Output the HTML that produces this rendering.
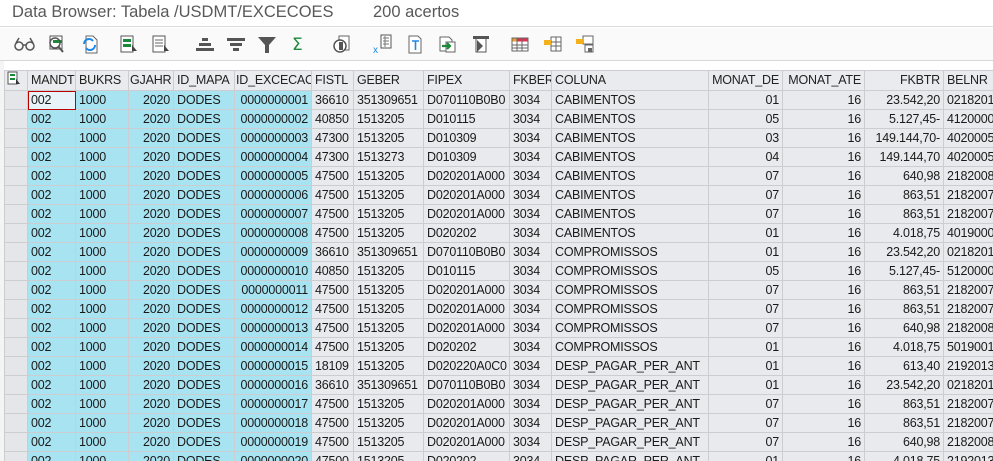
<!DOCTYPE html>
<html><head><meta charset="utf-8"><style>
*{margin:0;padding:0;box-sizing:border-box}
body{width:993px;height:461px;overflow:hidden;background:#fff;font-family:"Liberation Sans",sans-serif;position:relative}
#title{position:absolute;left:0;top:0;width:993px;height:27px;border-bottom:1px solid #dcdcdc;background:#fff}
#title span{position:absolute;top:3px;font-size:16.5px;color:#595959}
#tb{position:absolute;left:0;top:28px;width:993px;height:33px;background:#fafafa;border-bottom:1px solid #d8d8d8}
#tb svg{position:absolute;top:6px}
#wrap{position:absolute;left:0;top:61px;width:993px;height:400px;background:#fff;border-left:4px solid #f4f4f4;overflow:hidden}
table{position:absolute;left:0px;top:9px;width:999px;border-collapse:collapse;table-layout:fixed;font-size:12.5px;letter-spacing:-0.2px;color:#1a1a1a}
td,th{height:19px;border:1px solid #cbcdd0;padding:0 2px 0 3px;white-space:nowrap;overflow:hidden;font-weight:normal;text-align:left;line-height:17px}
th{background:#e9ebee;color:#222;height:18px}
td{background:#e8eaed}
td.k{background:#a8e3f1}
td.s{background:#e4e6e9}
.r{text-align:right;padding:0 3px 0 1px}
</style></head><body>
<div id="title"><span style="left:12px">Data Browser: Tabela /USDMT/EXCECOES</span><span style="left:373px">200 acertos</span></div>
<div id="tb">
<svg style="left:14px" width="22" height="20"><circle cx="5" cy="12" r="4" fill="none" stroke="#555" stroke-width="1.5"/><circle cx="16" cy="12" r="4" fill="none" stroke="#555" stroke-width="1.5"/><path d="M9 11h3M2 9l3-5M19 9l-3-5" stroke="#555" stroke-width="1.5" fill="none"/></svg>
<svg style="left:47px" width="20" height="20"><rect x="3" y="2" width="12" height="13" fill="#fff" stroke="#555"/><rect x="6" y="6" width="9" height="3" fill="#1a8a3a"/><circle cx="8" cy="9" r="5" fill="none" stroke="#555" stroke-width="1.5"/><path d="M11 12l5 6" stroke="#555" stroke-width="2"/></svg>
<svg style="left:80px" width="20" height="20"><path d="M6 2h7l4 4v13H6z" fill="#fff" stroke="#666"/><path d="M4 10a5 5 0 0 1 9-3M15 11a5 5 0 0 1-9 3" stroke="#1e88e5" stroke-width="2" fill="none"/></svg>
<svg style="left:119px" width="20" height="20"><rect x="2" y="2" width="12" height="16" fill="#fff" stroke="#555"/><rect x="4" y="5" width="8" height="3" fill="#1a8a3a"/><rect x="4" y="10" width="8" height="3" fill="#1a8a3a"/><path d="M13 11l5 6h-5z" fill="#444"/></svg>
<svg style="left:151px" width="20" height="20"><rect x="2" y="2" width="12" height="16" fill="#fff" stroke="#555"/><path d="M4 6h8M4 9h8M4 12h8" stroke="#666"/><path d="M13 11l5 6h-5z" fill="#444"/></svg>
<svg style="left:195px" width="20" height="20"><rect x="7" y="4" width="6" height="3" fill="#555"/><rect x="4" y="9" width="12" height="3" fill="#555"/><rect x="1" y="14" width="18" height="3" fill="#555"/></svg>
<svg style="left:226px" width="20" height="20"><rect x="1" y="4" width="18" height="3" fill="#555"/><rect x="4" y="9" width="12" height="3" fill="#555"/><rect x="7" y="14" width="6" height="3" fill="#555"/></svg>
<svg style="left:257px" width="20" height="20"><path d="M1 3h18l-7 8v8h-4v-8z" fill="#555"/></svg>
<svg style="left:289px" width="20" height="20"><text x="3" y="16" font-size="17" fill="#1a8a3a" font-family="DejaVu Sans">Σ</text></svg>
<svg style="left:332px" width="20" height="20"><rect x="7" y="2" width="10" height="14" fill="#fff" stroke="#666"/><circle cx="8" cy="12" r="6" fill="#fff" stroke="#555" stroke-width="1.5"/><rect x="7" y="8" width="4" height="8" fill="#555"/></svg>
<svg style="left:373px" width="20" height="20"><rect x="8" y="1" width="10" height="13" fill="#fff" stroke="#555"/><path d="M10 4h6M10 7h6M10 10h6M12 2v11" stroke="#777"/><text x="0" y="19" font-size="10" fill="#1e88e5">x</text></svg>
<svg style="left:405px" width="20" height="20"><path d="M4 2h9l3 3v14H4z" fill="#fff" stroke="#666"/><path d="M7 7h7M10.5 7v9" stroke="#1e88e5" stroke-width="1.6"/></svg>
<svg style="left:437px" width="20" height="20"><path d="M3 3h9l3 3v11H3z" fill="#fff" stroke="#666"/><rect x="9" y="8" width="9" height="10" fill="#fff" stroke="#666"/><path d="M5 12h7M10 9l3 3-3 3" stroke="#1a8a3a" stroke-width="2.2" fill="none"/></svg>
<svg style="left:471px" width="20" height="20"><rect x="2" y="2" width="16" height="3" fill="#555"/><path d="M5 5v13h10V5" fill="#fff" stroke="#555"/><path d="M6 6l6 6-6 6z" fill="#555"/></svg>
<svg style="left:510px" width="20" height="20"><rect x="2" y="4" width="16" height="13" fill="#fff" stroke="#666"/><rect x="2.5" y="4.5" width="15" height="3" fill="#d35"/><rect x="2.5" y="4.5" width="5" height="3" fill="#e8a030"/><path d="M2 11h16M2 14h16M7 4v13M12 4v13" stroke="#666"/></svg>
<svg style="left:543px" width="20" height="20"><rect x="8" y="3" width="10" height="14" fill="#fff" stroke="#666"/><path d="M8 8h10M8 12h10M13 3v14" stroke="#666"/><rect x="1" y="6" width="7" height="5" fill="#f3b21b"/></svg>
<svg style="left:575px" width="20" height="20"><rect x="8" y="2" width="10" height="8" fill="#fff" stroke="#666"/><rect x="10" y="11" width="8" height="7" fill="#fff" stroke="#666"/><rect x="1" y="5" width="7" height="5" fill="#f3b21b"/><rect x="13" y="14" width="4" height="4" fill="#666"/></svg>
</div>
<div id="wrap">
<table>
<colgroup><col style="width:23px"><col style="width:48px"><col style="width:53px"><col style="width:45px"><col style="width:61px"><col style="width:77px"><col style="width:42px"><col style="width:70px"><col style="width:86px"><col style="width:42px"><col style="width:157px"><col style="width:74px"><col style="width:82px"><col style="width:79px"><col style="width:60px"></colgroup>
<tr><th style="padding:0 2px"><svg width="16" height="14"><rect x="1" y="1" width="9" height="12" fill="#fff" stroke="#555"/><rect x="3" y="3" width="5" height="2" fill="#1a8a3a"/><rect x="3" y="7" width="5" height="2" fill="#1a8a3a"/><path d="M9 8l4 5h-4z" fill="#333"/></svg></th><th>MANDT</th><th>BUKRS</th><th class="r">GJAHR</th><th>ID_MAPA</th><th class="r">ID_EXCECAO</th><th>FISTL</th><th>GEBER</th><th>FIPEX</th><th>FKBER</th><th>COLUNA</th><th class="r">MONAT_DE</th><th class="r">MONAT_ATE</th><th class="r">FKBTR</th><th>BELNR</th></tr>
<tr><td class="s"></td><td class="k" style="background:#e8f2f9;outline:1px solid #b00;outline-offset:-1px">002</td><td class="k">1000</td><td class="k r">2020</td><td class="k">DODES</td><td class="k r">0000000001</td><td>36610</td><td>351309651</td><td>D070110B0B0</td><td>3034</td><td>CABIMENTOS</td><td class="r">01</td><td class="r">16</td><td class="r">23.542,20</td><td>0218201</td></tr>
<tr><td class="s"></td><td class="k">002</td><td class="k">1000</td><td class="k r">2020</td><td class="k">DODES</td><td class="k r">0000000002</td><td>40850</td><td>1513205</td><td>D010115</td><td>3034</td><td>CABIMENTOS</td><td class="r">05</td><td class="r">16</td><td class="r">5.127,45-</td><td>4120000</td></tr>
<tr><td class="s"></td><td class="k">002</td><td class="k">1000</td><td class="k r">2020</td><td class="k">DODES</td><td class="k r">0000000003</td><td>47300</td><td>1513205</td><td>D010309</td><td>3034</td><td>CABIMENTOS</td><td class="r">03</td><td class="r">16</td><td class="r">149.144,70-</td><td>4020005</td></tr>
<tr><td class="s"></td><td class="k">002</td><td class="k">1000</td><td class="k r">2020</td><td class="k">DODES</td><td class="k r">0000000004</td><td>47300</td><td>1513273</td><td>D010309</td><td>3034</td><td>CABIMENTOS</td><td class="r">04</td><td class="r">16</td><td class="r">149.144,70</td><td>4020005</td></tr>
<tr><td class="s"></td><td class="k">002</td><td class="k">1000</td><td class="k r">2020</td><td class="k">DODES</td><td class="k r">0000000005</td><td>47500</td><td>1513205</td><td>D020201A000</td><td>3034</td><td>CABIMENTOS</td><td class="r">07</td><td class="r">16</td><td class="r">640,98</td><td>2182008</td></tr>
<tr><td class="s"></td><td class="k">002</td><td class="k">1000</td><td class="k r">2020</td><td class="k">DODES</td><td class="k r">0000000006</td><td>47500</td><td>1513205</td><td>D020201A000</td><td>3034</td><td>CABIMENTOS</td><td class="r">07</td><td class="r">16</td><td class="r">863,51</td><td>2182007</td></tr>
<tr><td class="s"></td><td class="k">002</td><td class="k">1000</td><td class="k r">2020</td><td class="k">DODES</td><td class="k r">0000000007</td><td>47500</td><td>1513205</td><td>D020201A000</td><td>3034</td><td>CABIMENTOS</td><td class="r">07</td><td class="r">16</td><td class="r">863,51</td><td>2182007</td></tr>
<tr><td class="s"></td><td class="k">002</td><td class="k">1000</td><td class="k r">2020</td><td class="k">DODES</td><td class="k r">0000000008</td><td>47500</td><td>1513205</td><td>D020202</td><td>3034</td><td>CABIMENTOS</td><td class="r">01</td><td class="r">16</td><td class="r">4.018,75</td><td>4019000</td></tr>
<tr><td class="s"></td><td class="k">002</td><td class="k">1000</td><td class="k r">2020</td><td class="k">DODES</td><td class="k r">0000000009</td><td>36610</td><td>351309651</td><td>D070110B0B0</td><td>3034</td><td>COMPROMISSOS</td><td class="r">01</td><td class="r">16</td><td class="r">23.542,20</td><td>0218201</td></tr>
<tr><td class="s"></td><td class="k">002</td><td class="k">1000</td><td class="k r">2020</td><td class="k">DODES</td><td class="k r">0000000010</td><td>40850</td><td>1513205</td><td>D010115</td><td>3034</td><td>COMPROMISSOS</td><td class="r">05</td><td class="r">16</td><td class="r">5.127,45-</td><td>5120000</td></tr>
<tr><td class="s"></td><td class="k">002</td><td class="k">1000</td><td class="k r">2020</td><td class="k">DODES</td><td class="k r">0000000011</td><td>47500</td><td>1513205</td><td>D020201A000</td><td>3034</td><td>COMPROMISSOS</td><td class="r">07</td><td class="r">16</td><td class="r">863,51</td><td>2182007</td></tr>
<tr><td class="s"></td><td class="k">002</td><td class="k">1000</td><td class="k r">2020</td><td class="k">DODES</td><td class="k r">0000000012</td><td>47500</td><td>1513205</td><td>D020201A000</td><td>3034</td><td>COMPROMISSOS</td><td class="r">07</td><td class="r">16</td><td class="r">863,51</td><td>2182007</td></tr>
<tr><td class="s"></td><td class="k">002</td><td class="k">1000</td><td class="k r">2020</td><td class="k">DODES</td><td class="k r">0000000013</td><td>47500</td><td>1513205</td><td>D020201A000</td><td>3034</td><td>COMPROMISSOS</td><td class="r">07</td><td class="r">16</td><td class="r">640,98</td><td>2182008</td></tr>
<tr><td class="s"></td><td class="k">002</td><td class="k">1000</td><td class="k r">2020</td><td class="k">DODES</td><td class="k r">0000000014</td><td>47500</td><td>1513205</td><td>D020202</td><td>3034</td><td>COMPROMISSOS</td><td class="r">01</td><td class="r">16</td><td class="r">4.018,75</td><td>5019001</td></tr>
<tr><td class="s"></td><td class="k">002</td><td class="k">1000</td><td class="k r">2020</td><td class="k">DODES</td><td class="k r">0000000015</td><td>18109</td><td>1513205</td><td>D020220A0C0</td><td>3034</td><td>DESP_PAGAR_PER_ANT</td><td class="r">01</td><td class="r">16</td><td class="r">613,40</td><td>2192013</td></tr>
<tr><td class="s"></td><td class="k">002</td><td class="k">1000</td><td class="k r">2020</td><td class="k">DODES</td><td class="k r">0000000016</td><td>36610</td><td>351309651</td><td>D070110B0B0</td><td>3034</td><td>DESP_PAGAR_PER_ANT</td><td class="r">01</td><td class="r">16</td><td class="r">23.542,20</td><td>0218201</td></tr>
<tr><td class="s"></td><td class="k">002</td><td class="k">1000</td><td class="k r">2020</td><td class="k">DODES</td><td class="k r">0000000017</td><td>47500</td><td>1513205</td><td>D020201A000</td><td>3034</td><td>DESP_PAGAR_PER_ANT</td><td class="r">07</td><td class="r">16</td><td class="r">863,51</td><td>2182007</td></tr>
<tr><td class="s"></td><td class="k">002</td><td class="k">1000</td><td class="k r">2020</td><td class="k">DODES</td><td class="k r">0000000018</td><td>47500</td><td>1513205</td><td>D020201A000</td><td>3034</td><td>DESP_PAGAR_PER_ANT</td><td class="r">07</td><td class="r">16</td><td class="r">863,51</td><td>2182007</td></tr>
<tr><td class="s"></td><td class="k">002</td><td class="k">1000</td><td class="k r">2020</td><td class="k">DODES</td><td class="k r">0000000019</td><td>47500</td><td>1513205</td><td>D020201A000</td><td>3034</td><td>DESP_PAGAR_PER_ANT</td><td class="r">07</td><td class="r">16</td><td class="r">640,98</td><td>2182008</td></tr>
<tr><td class="s"></td><td class="k">002</td><td class="k">1000</td><td class="k r">2020</td><td class="k">DODES</td><td class="k r">0000000020</td><td>47500</td><td>1513205</td><td>D020202</td><td>3034</td><td>DESP_PAGAR_PER_ANT</td><td class="r">01</td><td class="r">16</td><td class="r">4.018,75</td><td>2192013</td></tr>
</table>
</div>
</body></html>
